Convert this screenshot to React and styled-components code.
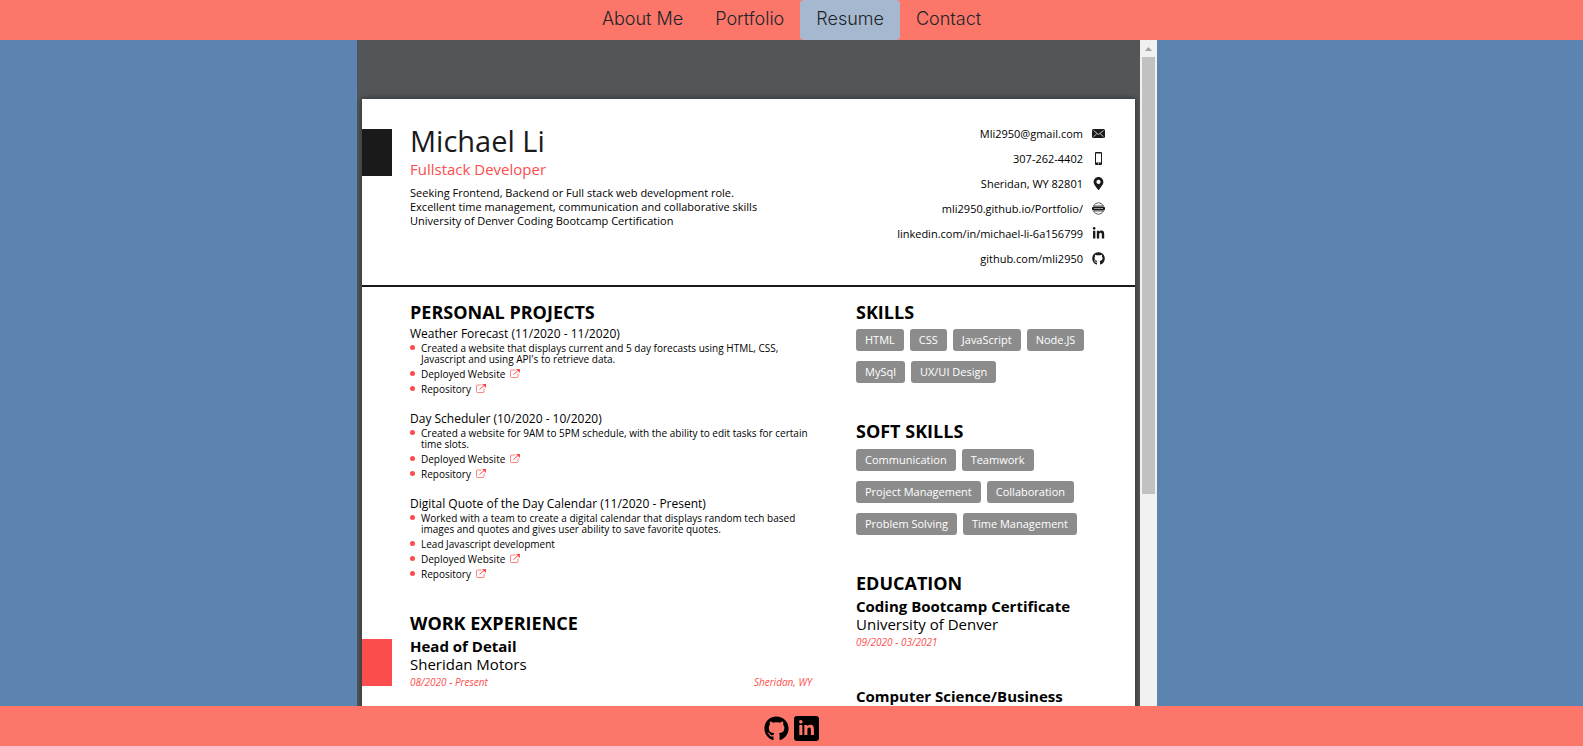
import React from "react";
import styled, { createGlobalStyle } from "styled-components";
import { FaGithub, FaLinkedinIn, FaMapMarkerAlt } from "react-icons/fa";

const coral = "#fc766a";
const blue = "#5b84b1";
const ink = "#1a1a1a";
const accent = "#fb4e4c";

const GlobalStyle = createGlobalStyle`
  *, *::before, *::after { box-sizing: border-box; }
  body { margin: 0; background: ${blue}; color: #000; font-family: "Open Sans", "Noto Sans", sans-serif; }
  h1, h2, h3, p, ul { margin: 0; padding: 0; }
  ul { list-style: none; }
  a { color: inherit; text-decoration: none; }
`;

const Layout = styled.div`
  display: flex;
  flex-direction: column;
  height: 100vh;
`;

const Nav = styled.nav`
  display: flex;
  justify-content: center;
  flex: none;
  height: 40px;
  background: ${coral};
`;

const NavLink = styled.a`
  padding: 0 16px;
  border-radius: 4px;
  background: ${(p) => (p.$active ? "#a5b8d0" : "transparent")};
  color: #212529;
  font: 300 18px/38px Inter, "Open Sans", sans-serif;
`;

const Main = styled.main`
  display: grid;
  grid-template-columns: 357fr minmax(0, 800px) 426fr;
  flex: 1;
  min-height: 0;
`;

const Viewer = styled.section`
  display: flex;
  grid-column: 2;
  min-height: 0;
  overflow: hidden;
  background: #525659;
`;

const Canvas = styled.div`
  flex: 1;
  min-width: 0;
  padding: 59px 5px 0;
`;

const ScrollTrack = styled.div`
  display: flex;
  flex-direction: column;
  align-items: center;
  flex: none;
  width: 17px;
  background: #f1f1f1;
`;

const ScrollArrow = styled.svg`
  flex: none;
  width: 17px;
  height: 17px;
`;

const ScrollThumb = styled.div`
  width: 13px;
  height: 437px;
  background: #c1c1c1;
`;

const Sheet = styled.article`
  background: #fff;
  box-shadow: 0 0 6px rgba(0, 0, 0, 0.5);
`;

const SheetHeader = styled.header`
  display: flex;
  align-items: flex-start;
  gap: 18px;
  min-height: 188px;
  padding: 22px 30px 0 0;
  border-bottom: 2px solid ${ink};
`;

const Marker = styled.span`
  flex: none;
  width: 30px;
  height: 47px;
  margin-top: ${(p) => p.$top}px;
  background: ${(p) => p.$color};
`;

const Intro = styled.div`
  flex: 1;
`;

const Name = styled.h1`
  color: ${ink};
  font-size: 29px;
  font-weight: 400;
  line-height: 40px;
`;

const Role = styled.p`
  margin-bottom: 9px;
  color: ${accent};
  font-size: 15px;
  line-height: 16px;
`;

const Summary = styled.p`
  font-size: 11px;
  line-height: 14px;
`;

const ContactRow = styled.li`
  display: flex;
  align-items: center;
  justify-content: flex-end;
  gap: 9px;
  height: 25px;
  font-size: 11px;

  svg {
    width: 13px;
    height: 13px;
    color: ${ink};
  }
`;

const Columns = styled.div`
  display: grid;
  grid-template-columns: minmax(0, 402px) minmax(0, 249px);
  gap: 44px;
  padding: 14px 30px 40px 48px;
`;

const Section = styled.section`
  margin-bottom: ${(p) => p.$space}px;
`;

const Heading = styled.h2`
  margin-bottom: ${(p) => p.$space}px;
  font-size: 18px;
  font-weight: 700;
  line-height: 22px;
`;

const Project = styled.div`
  & + & {
    margin-top: 15px;
  }
`;

const ProjectTitle = styled.h3`
  font-size: 12px;
  font-weight: 400;
  line-height: 18px;
`;

const Bullets = styled.ul`
  display: grid;
  gap: 4px;
`;

const Bullet = styled.li`
  display: flex;
  align-items: flex-start;
  gap: 6px;
  font-size: 10px;
  line-height: 11px;

  &::before {
    content: "";
    flex: none;
    width: 5px;
    height: 5px;
    margin-top: 2px;
    border-radius: 50%;
    background: ${accent};
  }
`;

const OutLink = styled.a`
  display: flex;
  gap: 5px;

  svg {
    width: 10px;
    height: 10px;
    color: ${accent};
  }
`;

const Entry = styled.div`
  display: flex;
  gap: 18px;
  margin-left: ${(p) => (p.$marked ? -48 : 0)}px;

  & + & {
    margin-top: 36px;
  }
`;

const EntryBody = styled.div`
  flex: 1;
`;

const EntryTitle = styled.h3`
  font-size: 15px;
  font-weight: ${(p) => (p.$bold ? 700 : 400)};
  line-height: 18px;
`;

const EntryMeta = styled.p`
  display: flex;
  justify-content: space-between;
  color: ${accent};
  font-size: 10px;
  font-style: italic;
  line-height: 18px;
`;

const Tags = styled.ul`
  display: flex;
  flex-wrap: wrap;
  gap: 10px 6px;
`;

const Tag = styled.li`
  padding: 0 9px;
  border-radius: 3px;
  background: #8c8c8c;
  color: #fff;
  font-size: 11px;
  line-height: 22px;
`;

const Footer = styled.footer`
  display: flex;
  align-items: center;
  justify-content: center;
  gap: 5px;
  flex: none;
  height: 40px;
  padding-top: 5px;
  background: ${coral};
`;

const SocialLink = styled.a`
  display: grid;
  place-items: center;
  width: 25px;
  height: 25px;
  border-radius: 3px;
  background: ${(p) => (p.$filled ? "#000" : "transparent")};
  color: ${(p) => (p.$filled ? coral : "#000")};
`;

const MailIcon = () => (
  <svg viewBox="0 0 26 26" aria-hidden="true">
    <rect x="0" y="4" width="26" height="18" rx="3" fill="currentColor" />
    <path d="M3 7l10 8 10-8M3 19.500l6.500-6M23 19.500l-6.500-6" fill="none" stroke="#fff" strokeWidth="1.500" />
  </svg>
);

const PhoneIcon = () => (
  <svg viewBox="0 0 26 26" aria-hidden="true">
    <path
      fill="currentColor"
      fillRule="evenodd"
      d="M8 0h10a2 2 0 0 1 2 2v22a2 2 0 0 1-2 2H8a2 2 0 0 1-2-2V2a2 2 0 0 1 2-2zM8 3v18h10V3zM12 22.500v2h2v-2z"
    />
  </svg>
);

const WebIcon = () => (
  <svg viewBox="0 0 26 26" aria-hidden="true">
    <path d="M3 8a11 11 0 0 1 20 0M3 18a11 11 0 0 0 20 0" fill="none" stroke="currentColor" strokeWidth="1.400" />
    <path d="M3 7.500h20M3 18.500h20" fill="none" stroke="currentColor" strokeWidth="1" />
    <rect x="0" y="9" width="26" height="8" rx="3" fill="currentColor" />
    <path d="M4 12l1.500 2 1.500-2 1.500 2 1.500-2M11 12l1.200 2 1.200-2 1.200 2 1.200-2M17 12l1.200 2 1.200-2 1.200 2 1.200-2" fill="none" stroke="#fff" strokeWidth="1" />
  </svg>
);

const OutIcon = () => (
  <svg viewBox="0 0 20 20" aria-hidden="true">
    <path d="M11 2H3a2 2 0 0 0-2 2v11a2 2 0 0 0 2 2h11a2 2 0 0 0 2-2V9" fill="none" stroke="currentColor" strokeWidth="1.400" />
    <path d="M7 11L16 3" fill="none" stroke="currentColor" strokeWidth="2" />
    <path d="M12 0h8v8z" fill="currentColor" />
  </svg>
);

const navItems = ["About Me", "Portfolio", "Resume", "Contact"];

const contacts = [
  { text: "Mli2950@gmail.com", href: "mailto:Mli2950@gmail.com", Icon: MailIcon },
  { text: "307-262-4402", href: "tel:3072624402", Icon: PhoneIcon },
  { text: "Sheridan, WY 82801", Icon: FaMapMarkerAlt },
  { text: "mli2950.github.io/Portfolio/", href: "https://mli2950.github.io/Portfolio/", Icon: WebIcon },
  { text: "linkedin.com/in/michael-li-6a156799", href: "https://linkedin.com/in/michael-li-6a156799", Icon: FaLinkedinIn },
  { text: "github.com/mli2950", href: "https://github.com/mli2950", Icon: FaGithub },
];

const projects = [
  {
    title: "Weather Forecast (11/2020 - 11/2020)",
    points: [["Created a website that displays current and 5 day forecasts using HTML, CSS,", "Javascript and using API's to retrieve data."]],
  },
  {
    title: "Day Scheduler (10/2020 - 10/2020)",
    points: [["Created a website for 9AM to 5PM schedule, with the ability to edit tasks for certain", "time slots."]],
  },
  {
    title: "Digital Quote of the Day Calendar (11/2020 - Present)",
    points: [
      ["Worked with a team to create a digital calendar that displays random tech based", "images and quotes and gives user ability to save favorite quotes."],
      ["Lead Javascript development"],
    ],
  },
];

const skills = ["HTML", "CSS", "JavaScript", "Node.JS", "MySql", "UX/UI Design"];
const softSkills = ["Communication", "Teamwork", "Project Management", "Collaboration", "Problem Solving", "Time Management"];

const Lines = ({ lines }) => (
  <span>
    {lines.map((line, i) => (
      <React.Fragment key={line}>
        {i > 0 && <br />}
        {line}
      </React.Fragment>
    ))}
  </span>
);

const TagSection = ({ title, tags, space }) => (
  <Section $space={37}>
    <Heading $space={space}>{title}</Heading>
    <Tags>
      {tags.map((tag) => (
        <Tag key={tag}>{tag}</Tag>
      ))}
    </Tags>
  </Section>
);

export default function App() {
  return (
    <Layout>
      <GlobalStyle />
      <Nav>
        {navItems.map((item) => (
          <NavLink key={item} href="#" $active={item === "Resume"}>
            {item}
          </NavLink>
        ))}
      </Nav>
      <Main>
        <Viewer>
          <Canvas>
            <Sheet>
              <SheetHeader>
                <Marker $color={ink} $top={8} />
                <Intro>
                  <Name>Michael Li</Name>
                  <Role>Fullstack Developer</Role>
                  <Summary>
                    Seeking Frontend, Backend or Full stack web development role.
                    <br />
                    Excellent time management, communication and collaborative skills
                    <br />
                    University of Denver Coding Bootcamp Certification
                  </Summary>
                </Intro>
                <ul>
                  {contacts.map(({ text, href, Icon }) => (
                    <ContactRow key={text}>
                      {href ? <a href={href}>{text}</a> : <span>{text}</span>}
                      <Icon />
                    </ContactRow>
                  ))}
                </ul>
              </SheetHeader>
              <Columns>
                <div>
                  <Section $space={32}>
                    <Heading $space={2}>PERSONAL PROJECTS</Heading>
                    {projects.map(({ title, points }) => (
                      <Project key={title}>
                        <ProjectTitle>{title}</ProjectTitle>
                        <Bullets>
                          {points.map((lines) => (
                            <Bullet key={lines[0]}>
                              <Lines lines={lines} />
                            </Bullet>
                          ))}
                          {["Deployed Website", "Repository"].map((label) => (
                            <Bullet key={label}>
                              <OutLink href="#">
                                {label}
                                <OutIcon />
                              </OutLink>
                            </Bullet>
                          ))}
                        </Bullets>
                      </Project>
                    ))}
                  </Section>
                  <Section $space={32}>
                    <Heading $space={3}>WORK EXPERIENCE</Heading>
                    <Entry $marked>
                      <Marker $color={accent} $top={2} />
                      <EntryBody>
                        <EntryTitle $bold>Head of Detail</EntryTitle>
                        <EntryTitle as="p">Sheridan Motors</EntryTitle>
                        <EntryMeta>
                          <span>08/2020 - Present</span>
                          <span>Sheridan, WY</span>
                        </EntryMeta>
                      </EntryBody>
                    </Entry>
                  </Section>
                </div>
                <div>
                  <TagSection title="SKILLS" tags={skills} space={6} />
                  <TagSection title="SOFT SKILLS" tags={softSkills} space={7} />
                  <Section $space={32}>
                    <Heading $space={3}>EDUCATION</Heading>
                    <Entry>
                      <EntryBody>
                        <EntryTitle $bold>Coding Bootcamp Certificate</EntryTitle>
                        <EntryTitle as="p">University of Denver</EntryTitle>
                        <EntryMeta>09/2020 - 03/2021</EntryMeta>
                      </EntryBody>
                    </Entry>
                    <Entry>
                      <EntryBody>
                        <EntryTitle $bold>Computer Science/Business</EntryTitle>
                      </EntryBody>
                    </Entry>
                  </Section>
                </div>
              </Columns>
            </Sheet>
          </Canvas>
          <ScrollTrack aria-hidden="true">
            <ScrollArrow viewBox="0 0 17 17">
              <path d="M5 11l3.500-4 3.500 4z" fill="#a3a3a3" />
            </ScrollArrow>
            <ScrollThumb />
          </ScrollTrack>
        </Viewer>
      </Main>
      <Footer>
        <SocialLink href="https://github.com/mli2950" aria-label="GitHub">
          <FaGithub size={25} />
        </SocialLink>
        <SocialLink href="https://linkedin.com/in/michael-li-6a156799" aria-label="LinkedIn" $filled>
          <FaLinkedinIn size={17} />
        </SocialLink>
      </Footer>
    </Layout>
  );
}
